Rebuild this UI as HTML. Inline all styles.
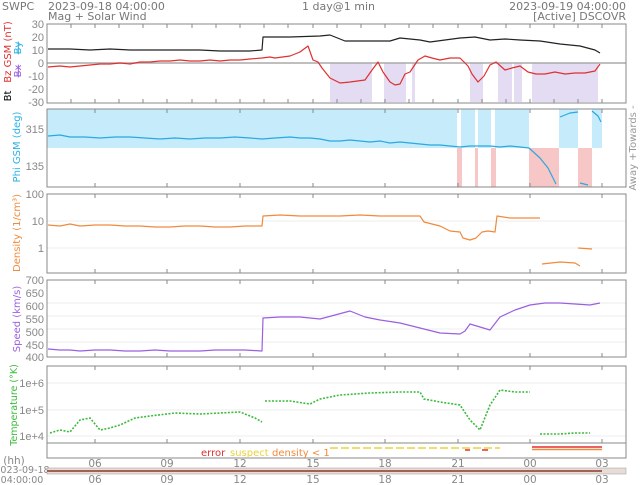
<!DOCTYPE html>
<html><head><meta charset="utf-8"><style>
body{margin:0;background:#fff;width:640px;height:485px;overflow:hidden}
svg{display:block;font-family:"DejaVu Sans","Liberation Sans",sans-serif}
.lt{font-family:"Liberation Sans",sans-serif}
</style></head><body>
<svg width="640" height="485" viewBox="0 0 640 485" xmlns="http://www.w3.org/2000/svg">
<g fill="#777" font-size="11">
<text x="2" y="10">SWPC</text>
<text x="48" y="10">2023-09-18 04:00:00</text>
<text x="48" y="20">Mag + Solar Wind</text>
<text x="302" y="10">1 day@1 min</text>
<text x="626" y="10" text-anchor="end">2023-09-19 04:00:00</text>
<text x="626" y="20" text-anchor="end">[Active] DSCOVR</text>
</g>
<g fill="#e3dcf3">
<rect x="330" y="63" width="42" height="39"/><rect x="384" y="63" width="22" height="39"/><rect x="412" y="63" width="3" height="39"/>
<rect x="470" y="63" width="13" height="39"/><rect x="498" y="63" width="14" height="39"/><rect x="514" y="63" width="8" height="39"/><rect x="532" y="63" width="66" height="39"/>
</g>
<g fill="#c6ebfa">
<rect x="47" y="109" width="410" height="39"/><rect x="461" y="109" width="14" height="39"/><rect x="478" y="109" width="13" height="39"/><rect x="495" y="109" width="34" height="39"/>
<rect x="559" y="109" width="19" height="39"/><rect x="592" y="109" width="10" height="39"/>
</g>
<g fill="#f7c6c6">
<rect x="457" y="148" width="5" height="39"/><rect x="475" y="148" width="3" height="39"/><rect x="491" y="148" width="5" height="39"/>
<rect x="529" y="148" width="30" height="39"/><rect x="578" y="148" width="14" height="39"/>
</g>
<g stroke="#eee" stroke-width="1">
<line x1="47" x2="626" y1="221" y2="221"/><line x1="47" x2="626" y1="248" y2="248"/>
<line x1="47" x2="626" y1="303" y2="303"/><line x1="47" x2="626" y1="316" y2="316"/><line x1="47" x2="626" y1="329" y2="329"/><line x1="47" x2="626" y1="342" y2="342"/>
<line x1="47" x2="626" y1="383" y2="383"/><line x1="47" x2="626" y1="410" y2="410"/><line x1="47" x2="626" y1="436" y2="436"/>
</g>
<line x1="47" x2="626" y1="63" y2="63" stroke="#aaa" stroke-width="1.5"/>
<g fill="none" stroke="#888" stroke-width="1">
<rect x="47" y="24" width="579" height="79"/>
<rect x="47" y="109" width="579" height="78"/>
<rect x="47" y="194" width="579" height="79"/>
<rect x="47" y="280" width="579" height="77"/>
<rect x="47" y="366" width="579" height="77"/>
<rect x="47" y="443" width="579" height="15"/>
</g>
<g stroke="#888" stroke-width="1">
<path d="M71 24v4M95 24v4M119 24v4M143 24v4M167 24v4M192 24v4M216 24v4M240 24v4M264 24v4M288 24v4M313 24v4M337 24v4M361 24v4M385 24v4M409 24v4M433 24v4M458 24v4M482 24v4M506 24v4M530 24v4M554 24v4M578 24v4M602 24v4"/>
<path d="M71 103v-4M95 103v-4M119 103v-4M143 103v-4M167 103v-4M192 103v-4M216 103v-4M240 103v-4M264 103v-4M288 103v-4M313 103v-4M337 103v-4M361 103v-4M385 103v-4M409 103v-4M433 103v-4M458 103v-4M482 103v-4M506 103v-4M530 103v-4M554 103v-4M578 103v-4M602 103v-4"/>
<path d="M95 109v4M167 109v4M240 109v4M313 109v4M385 109v4M458 109v4M530 109v4M602 109v4M95 187v-4M167 187v-4M240 187v-4M313 187v-4M385 187v-4M458 187v-4M530 187v-4M602 187v-4"/>
<path d="M95 194v4M167 194v4M240 194v4M313 194v4M385 194v4M458 194v4M530 194v4M602 194v4M95 273v-4M167 273v-4M240 273v-4M313 273v-4M385 273v-4M458 273v-4M530 273v-4M602 273v-4"/>
<path d="M95 280v4M167 280v4M240 280v4M313 280v4M385 280v4M458 280v4M530 280v4M602 280v4M95 357v-4M167 357v-4M240 357v-4M313 357v-4M385 357v-4M458 357v-4M530 357v-4M602 357v-4"/>
<path d="M95 366v4M167 366v4M240 366v4M313 366v4M385 366v4M458 366v4M530 366v4M602 366v4M95 443v-4M167 443v-4M240 443v-4M313 443v-4M385 443v-4M458 443v-4M530 443v-4M602 443v-4"/>
</g>
<g fill="#888" font-size="11" text-anchor="end" class="lt">
<text x="44" y="28">30</text><text x="44" y="41">20</text><text x="44" y="54">10</text><text x="44" y="67">0</text><text x="44" y="80">-10</text><text x="44" y="93">-20</text><text x="44" y="106">-30</text>
<text x="44" y="133">315</text><text x="44" y="170">135</text>
<text x="44" y="198">100</text><text x="44" y="225">10</text><text x="44" y="252">1</text>
<text x="44" y="284">700</text><text x="44" y="297">650</text><text x="44" y="310">600</text><text x="44" y="323">550</text><text x="44" y="336">500</text><text x="44" y="349">450</text><text x="44" y="361">400</text>
<text x="44" y="387">1e+6</text><text x="44" y="414">1e+5</text><text x="44" y="440">1e+4</text>
</g>
<g font-size="10" text-anchor="middle">
<text transform="translate(11,96) rotate(-90)" fill="#000">Bt</text>
<text transform="translate(11,52) rotate(-90)" fill="#e03030">Bz GSM (nT)</text>
<text transform="translate(21,71) rotate(-90)" fill="#9b5fe0" text-decoration="line-through">Bx</text>
<text transform="translate(21,48) rotate(-90)" fill="#28b0e8" text-decoration="line-through">By</text>
<text transform="translate(20,147) rotate(-90)" fill="#28b0e8">Phi GSM (deg)</text>
<text transform="translate(20,233) rotate(-90)" fill="#f08a3c">Density (1/cm³)</text>
<text transform="translate(20,319) rotate(-90)" fill="#9b5fe0">Speed (km/s)</text>
<text transform="translate(17,405) rotate(-90)" fill="#3cbb3c" font-size="9.5">Temperature (°K)</text>
<text transform="translate(636,148) rotate(-90)" fill="#999">Away +Towards -</text>
</g>
<g fill="none" stroke-width="1.2" stroke-linejoin="round">
<polyline stroke="#222" points="48,49 70,49 90,50 110,49 130,50 150,50 170,50 200,50 220,51 230,51 250,51 262,50 263,37 290,37 320,36 330,35 345,41 370,41 390,41 400,38 420,40 430,42 445,40 460,38 475,37 490,40 505,39 520,40 540,41 560,44 580,46 595,50 600,53"/>
<polyline stroke="#e03030" points="48,67 60,66 70,67 80,66 90,65 100,64 110,64 120,63 130,64 140,62 150,62 160,61 170,61 180,60 190,61 200,61 210,60 220,61 230,60 240,60 250,59 262,58 270,57 275,58 290,56 300,52 308,46 313,60 318,62 322,68 330,78 340,83 350,82 365,80 372,70 378,62 383,72 390,82 395,85 400,84 405,74 410,72 418,60 425,56 432,58 440,60 450,58 460,58 468,66 472,74 478,82 484,76 490,65 496,62 505,70 512,68 520,66 528,72 536,74 545,74 555,72 565,74 575,73 585,73 595,71 600,64"/>
<polyline stroke="#2aa8e0" points="48,136 60,135 70,137 85,137 100,138 115,137 130,137 145,138 160,139 175,138 190,139 205,138 220,138 235,137 250,138 262,139 275,138 290,137 300,138 310,138 320,139 330,141 340,141 350,140 360,141 370,142 380,141 390,143 400,142 410,143 420,144 430,145 440,145 450,146 460,147 470,146 480,146 490,146 500,147 510,146 520,147 529,148 540,158 548,168 556,184"/>
<polyline stroke="#2aa8e0" points="560,117 570,113 578,112"/><polyline stroke="#2aa8e0" points="580,183 588,185"/><polyline stroke="#2aa8e0" points="592,111 598,116 601,122"/>
<polyline stroke="#f08a3c" points="48,225 60,226 70,224 80,226 95,225 110,225 125,226 140,226 155,227 170,227 185,226 200,226 215,227 230,227 245,226 262,226 263,216 280,215 300,216 320,216 340,216 360,215 380,216 400,216 420,216 424,222 440,226 450,231 460,232 463,238 470,240 476,238 482,232 488,231 495,232 497,216 510,218 520,218 540,218"/>
<polyline stroke="#f08a3c" points="542,264 560,262 575,263 580,266"/><polyline stroke="#f08a3c" points="578,248 592,249"/>
<polyline stroke="#9b5fe0" points="48,349 60,350 70,350 80,351 95,350 110,350 125,351 140,351 155,350 170,351 185,351 200,351 215,350 230,350 245,350 262,351 263,318 280,317 300,317 320,319 335,315 350,311 365,317 380,320 400,323 420,328 440,333 460,334 465,331 470,324 480,327 490,330 500,317 515,310 530,305 545,303 560,303 575,304 590,305 600,303"/>
</g>
<g fill="none" stroke="#3cbb3c" stroke-width="1.6" stroke-dasharray="2 1.5">
<polyline points="50,433 60,430 70,432 80,420 90,418 100,430 110,428 120,425 135,418 150,416 175,413 200,414 220,413 240,412 255,418 262,422"/>
<polyline points="265,401 290,401 310,404 320,399 340,395 370,393 400,392 420,392 424,399 440,402 460,405 470,420 480,430 490,405 500,390 515,392 530,392"/>
<polyline points="540,434 560,434 575,433 590,433"/>
</g>
<g stroke-width="1.5">
<line x1="330" x2="500" y1="448" y2="448" stroke="#ead23c" stroke-dasharray="8 3"/>
<line x1="532" x2="602" y1="447" y2="447" stroke="#e03030"/>
<line x1="532" x2="602" y1="449.5" y2="449.5" stroke="#f08a3c"/>
<line x1="465" x2="470" y1="450" y2="450" stroke="#e03030"/>
<line x1="482" x2="488" y1="450" y2="450" stroke="#e03030"/>
</g>
<g font-size="10"><text x="201" y="456" fill="#e03030">error</text><text x="230" y="456" fill="#ead23c">suspect</text><text x="272" y="456" fill="#f08a3c">density &lt; 1</text></g>
<g fill="#888" font-size="10.5" text-anchor="middle">
<text x="14" y="464">(hh)</text>
<text x="95" y="467">06</text><text x="167" y="467">09</text><text x="240" y="467">12</text><text x="313" y="467">15</text><text x="385" y="467">18</text><text x="458" y="467">21</text><text x="530" y="467">00</text><text x="602" y="467">03</text>
<text x="95" y="483">06</text><text x="167" y="483">09</text><text x="240" y="483">12</text><text x="313" y="483">15</text><text x="385" y="483">18</text><text x="458" y="483">21</text><text x="530" y="483">00</text><text x="602" y="483">03</text>
<text x="22" y="473" font-size="9.5">2023-09-18</text><text x="22" y="483" font-size="9.5">04:00:00</text>
</g>
<rect x="47" y="468" width="579" height="6" fill="#e8ddd6" stroke="#999" stroke-width="0.5"/>
<line x1="47" x2="602" y1="471" y2="471" stroke="#8b3a2a" stroke-width="1.5"/>
</svg>
</body></html>
